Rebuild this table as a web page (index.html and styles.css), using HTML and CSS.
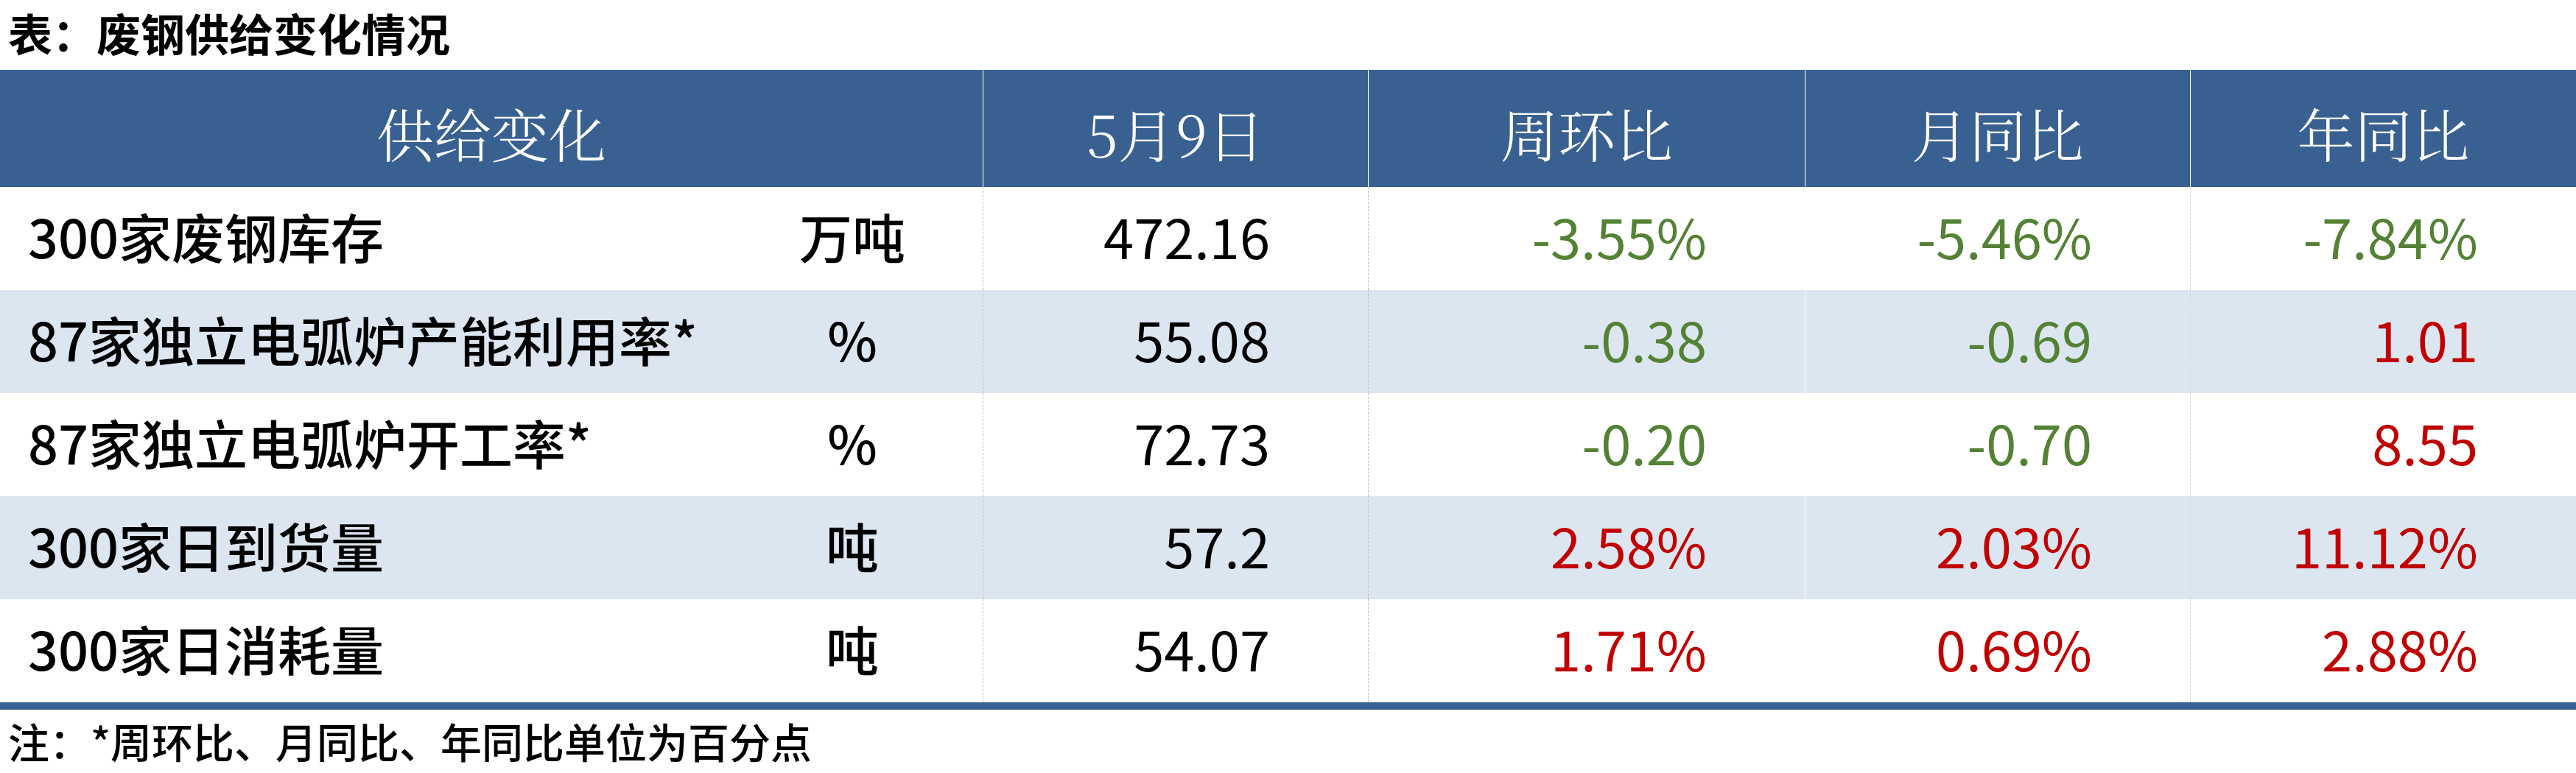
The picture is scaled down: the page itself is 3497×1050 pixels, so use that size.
FILE: index.html
```html
<!DOCTYPE html>
<html lang="zh-CN">
<head>
<meta charset="utf-8">
<title>废钢供给变化情况</title>
<link rel="stylesheet" href="styles.css">
</head>
<body>
<div class="page">
  <div class="title">表：废钢供给变化情况</div>
  <div class="table">
    <div class="hd hd-name">供给变化</div>
    <div class="hd hd-sep">5月9日</div>
    <div class="hd hd-sep">周环比</div>
    <div class="hd hd-sep">月同比</div>
    <div class="hd hd-sep">年同比</div>

    <div class="row">
      <div class="cell name">300家废钢库存</div>
      <div class="cell unit">万吨</div>
      <div class="cell num c2">472.16</div>
      <div class="cell num c3 green">-3.55%</div>
      <div class="cell num c4 green">-5.46%</div>
      <div class="cell num c5 green">-7.84%</div>
    </div>
    <div class="row alt">
      <div class="cell name">87家独立电弧炉产能利用率*</div>
      <div class="cell unit">%</div>
      <div class="cell num c2">55.08</div>
      <div class="cell num c3 green">-0.38</div>
      <div class="cell num c4 green">-0.69</div>
      <div class="cell num c5 red">1.01</div>
    </div>
    <div class="row">
      <div class="cell name">87家独立电弧炉开工率*</div>
      <div class="cell unit">%</div>
      <div class="cell num c2">72.73</div>
      <div class="cell num c3 green">-0.20</div>
      <div class="cell num c4 green">-0.70</div>
      <div class="cell num c5 red">8.55</div>
    </div>
    <div class="row alt">
      <div class="cell name">300家日到货量</div>
      <div class="cell unit">吨</div>
      <div class="cell num c2">57.2</div>
      <div class="cell num c3 red">2.58%</div>
      <div class="cell num c4 red">2.03%</div>
      <div class="cell num c5 red">11.12%</div>
    </div>
    <div class="row">
      <div class="cell name">300家日消耗量</div>
      <div class="cell unit">吨</div>
      <div class="cell num c2">54.07</div>
      <div class="cell num c3 red">1.71%</div>
      <div class="cell num c4 red">0.69%</div>
      <div class="cell num c5 red">2.88%</div>
    </div>
  </div>
  <div class="bar"></div>
  <div class="note">注：*周环比、月同比、年同比单位为百分点</div>
</div>
</body>
</html>
```

FILE: styles.css
```css
* { box-sizing: border-box; }
html, body {
  margin: 0;
  padding: 0;
  background: #ffffff;
}
body {
  font-family: "Noto Sans CJK SC", "Noto Sans", sans-serif;
  color: #000;
}
.page {
  width: 3497px;
}
.title {
  height: 95px;
  line-height: 87px;
  padding-left: 11px;
  font-size: 60px;
  font-weight: 700;
  white-space: nowrap;
}
.table {
  display: grid;
  grid-template-columns: 980px 354px 523px 593px 523px 524px;
  grid-template-rows: 159px repeat(5, 140px);
}
.hd {
  background: #386192;
  color: #ffffff;
  font-family: "Noto Serif CJK SC", "Noto Sans CJK SC", serif;
  font-weight: 300;
  font-size: 78px;
  display: flex;
  align-items: center;
  justify-content: center;
  padding-top: 10px;
  white-space: nowrap;
}
.hd-name {
  grid-column: span 2;
}
.hd-sep {
  border-left: 1px solid #ffffff;
}
.row {
  display: contents;
}
.cell {
  display: flex;
  align-items: center;
  font-size: 74px;
  font-weight: 500;
  white-space: nowrap;
  padding-bottom: 10px;
  background: #ffffff;
}
.row.alt .cell {
  background: #dce6f1;
}
.name {
  padding-left: 38px;
  font-size: 72px;
}
.unit {
  justify-content: center;
  font-size: 72px;
}
.num {
  justify-content: flex-end;
  padding-right: 133px;
  font-weight: 400;
}
.c2 { border-left: 1px dashed #bfbfbf; }
.c3 { border-left: 1px dashed #bfbfbf; }
.c4 { border-left: 1px solid #ffffff; }
.c5 { border-left: 1px dashed #d3dae3; }
.green { color: #548235; }
.red { color: #c00000; }
.bar {
  height: 10px;
  background: #386192;
}
.note {
  height: 86px;
  line-height: 84px;
  padding-left: 11px;
  font-size: 56px;
  font-weight: 500;
  white-space: nowrap;
}
```
